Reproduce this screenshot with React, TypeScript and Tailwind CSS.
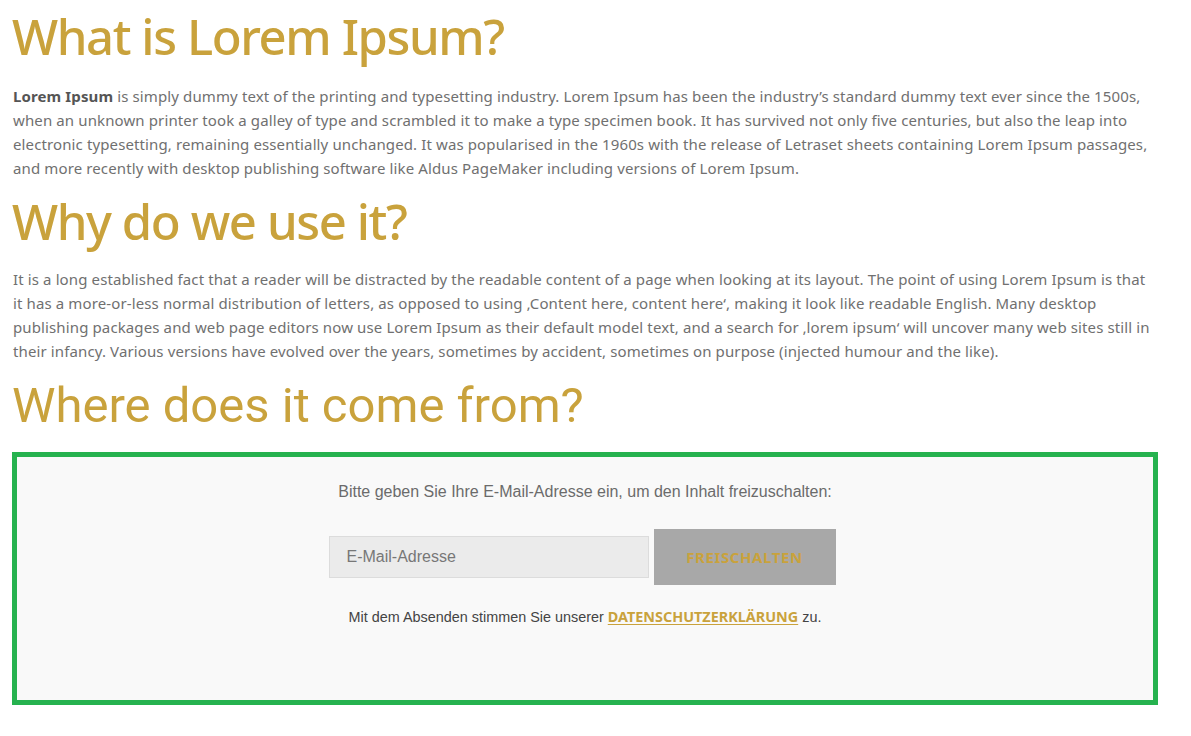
export default function App() {
  const body = "text-[15px] leading-[24px] tracking-[0.12px] text-[#707070] font-['Noto_Sans',sans-serif]";
  const head = "text-[49px] leading-[60px] text-[#c9a23c]";

  return (
    <div className="min-h-screen bg-white">
      <div className="ml-[12px] w-[1146px] pt-[6px] pb-[30px]">
        <h1 className={`${head} font-medium tracking-[-1.4px] font-['Noto_Sans',sans-serif]`}>What is Lorem Ipsum?</h1>
        <p className={`${body} mt-[18px] pl-[1px]`}>
          <strong className="font-bold text-[#555]">Lorem Ipsum</strong> is simply dummy text of the printing and
          typesetting industry. Lorem Ipsum has been the industry’s standard dummy text ever since the 1500s, when an
          unknown printer took a galley of type and scrambled it to make a type specimen book. It has survived not only
          five centuries, but also the leap into electronic typesetting, remaining essentially unchanged. It was
          popularised in the 1960s with the release of Letraset sheets containing Lorem Ipsum passages, and more recently
          with desktop publishing software like Aldus PageMaker including versions of Lorem Ipsum.
        </p>

        <h2 className={`${head} mt-[11px] font-medium tracking-[-1.4px] font-['Noto_Sans',sans-serif]`}>Why do we use it?</h2>
        <p className={`${body} mt-[16px] pl-[1px]`}>
          It is a long established fact that a reader will be distracted by the readable content of a page when looking
          at its layout. The point of using Lorem Ipsum is that it has a more-or-less normal distribution of letters, as
          opposed to using ‚Content here, content here‘, making it look like readable English. Many desktop publishing
          packages and web page editors now use Lorem Ipsum as their default model text, and a search for ‚lorem ipsum‘
          will uncover many web sites still in their infancy. Various versions have evolved over the years, sometimes by
          accident, sometimes on purpose (injected humour and the like).
        </p>

        <h2 className={`${head} mt-[13px] font-normal font-['Roboto',sans-serif]`}>Where does it come from?</h2>

        {/* content lock box */}
        <div className="mt-[16px] h-[253px] border-[5px] border-[#26b24f] bg-[#f9f9f9] pt-[24px] flex flex-col items-center">
          <p className="text-[16px] leading-[22px] text-[#6b6b6b] font-['Liberation_Sans',sans-serif]">
            Bitte geben Sie Ihre E-Mail-Adresse ein, um den Inhalt freizuschalten:
          </p>

          <div className="mt-[26px] mr-[6px] flex items-center gap-[5px]">
            <input
              type="email"
              placeholder="E-Mail-Adresse"
              className="w-[320px] h-[42px] border border-[#dcdcdc] bg-[#ebebeb] px-[17px] text-[16px] text-[#555] placeholder:text-[#777] font-['Liberation_Sans',sans-serif] outline-none"
            />
            <button className="w-[182px] h-[56px] bg-[#a8a8a8] text-[#c9a23c] text-[15px] font-bold tracking-[0.6px] font-['Noto_Sans',sans-serif]">
              FREISCHALTEN
            </button>
          </div>

          <p className="mt-[22px] text-[14.4px] leading-[20px] text-[#444] font-['Liberation_Sans',sans-serif]">
            Mit dem Absenden stimmen Sie unserer{" "}
            <a href="#" className="font-bold text-[#c9a23c] underline underline-offset-2 font-['Noto_Sans',sans-serif]">
              DATENSCHUTZERKLÄRUNG
            </a>{" "}
            zu.
          </p>
        </div>
      </div>
    </div>
  );
}
